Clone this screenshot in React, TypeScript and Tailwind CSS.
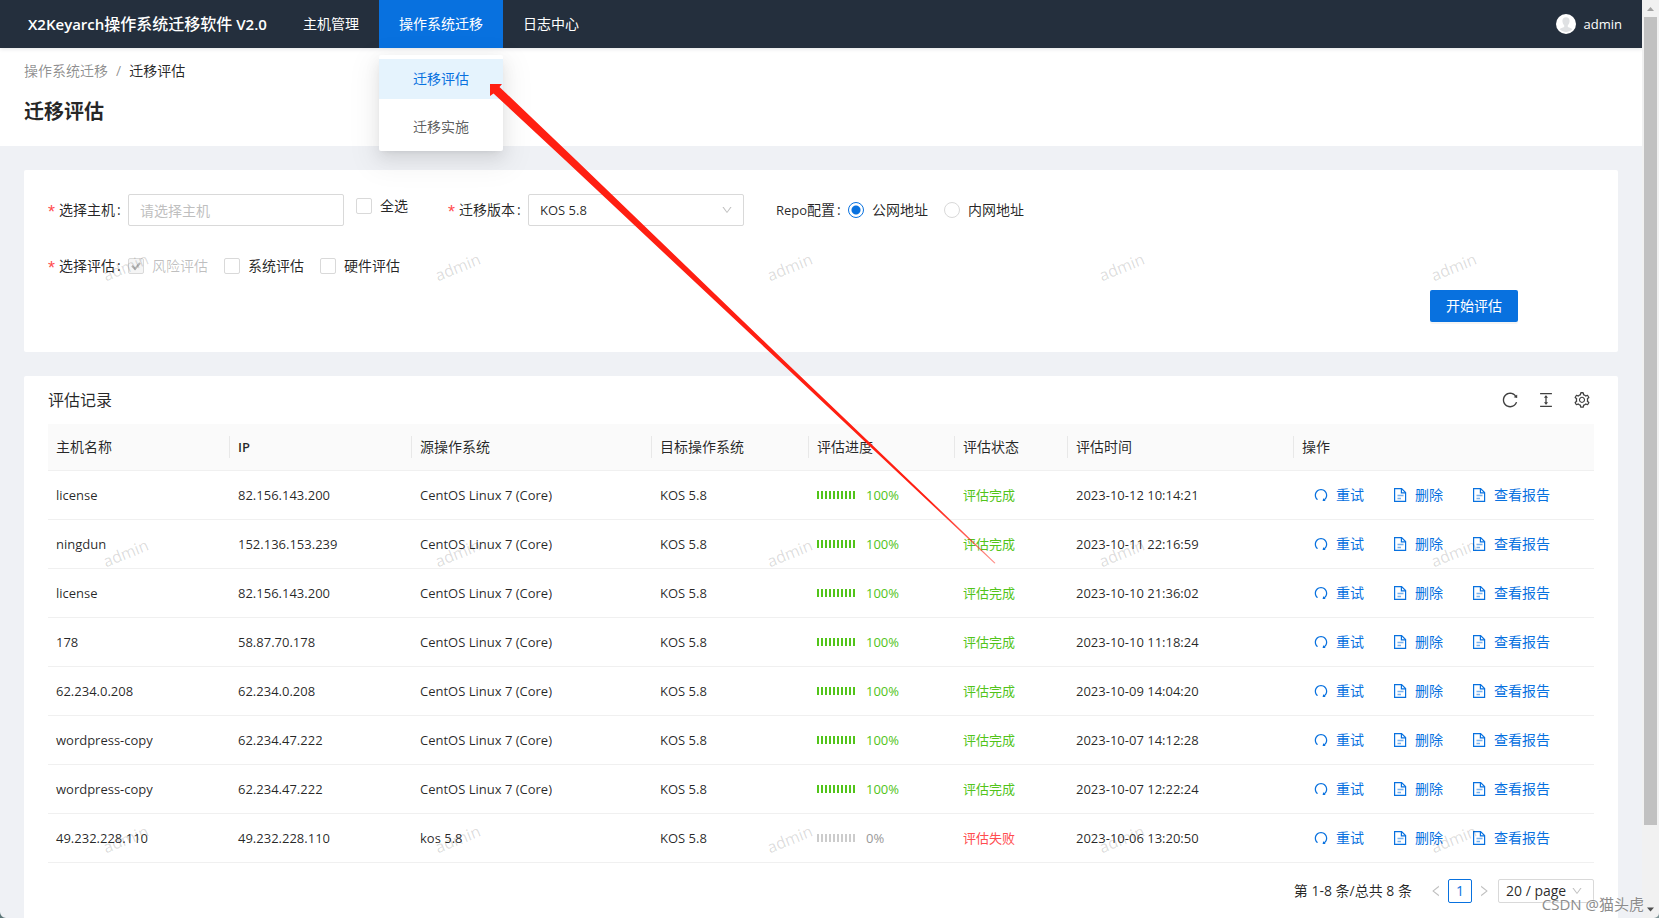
import { useState, type ReactNode } from 'react';
import {
  AiOutlineColumnHeight,
  AiOutlineDown,
  AiOutlineLeft,
  AiOutlineRedo,
  AiOutlineReload,
  AiOutlineRight,
  AiOutlineSetting
} from 'react-icons/ai';

const columns = [
  { title: '主机名称', width: 182 },
  { title: 'IP', width: 182, bold: true },
  { title: '源操作系统', width: 240 },
  { title: '目标操作系统', width: 157 },
  { title: '评估进度', width: 146 },
  { title: '评估状态', width: 113 },
  { title: '评估时间', width: 226 },
  { title: '操作', width: 300 }
];

const records = [
  { host: 'license', ip: '82.156.143.200', source: 'CentOS Linux 7 (Core)', done: true, time: '2023-10-12 10:14:21' },
  { host: 'ningdun', ip: '152.136.153.239', source: 'CentOS Linux 7 (Core)', done: true, time: '2023-10-11 22:16:59' },
  { host: 'license', ip: '82.156.143.200', source: 'CentOS Linux 7 (Core)', done: true, time: '2023-10-10 21:36:02' },
  { host: '178', ip: '58.87.70.178', source: 'CentOS Linux 7 (Core)', done: true, time: '2023-10-10 11:18:24' },
  { host: '62.234.0.208', ip: '62.234.0.208', source: 'CentOS Linux 7 (Core)', done: true, time: '2023-10-09 14:04:20' },
  { host: 'wordpress-copy', ip: '62.234.47.222', source: 'CentOS Linux 7 (Core)', done: true, time: '2023-10-07 14:12:28' },
  { host: 'wordpress-copy', ip: '62.234.47.222', source: 'CentOS Linux 7 (Core)', done: true, time: '2023-10-07 12:22:24' },
  { host: '49.232.228.110', ip: '49.232.228.110', source: 'kos 5.8', done: false, time: '2023-10-06 13:20:50' }
];

const FileIcon = () => (
  <svg width="16" height="16" viewBox="0 0 16 16" fill="none" stroke="currentColor">
    <path d="M2.600 1.600h7l4 4v8.800h-11z" fill="#fff" strokeWidth="1.2" />
    <path d="M9.400 1.800v4h4" strokeWidth="1.2" />
    <path d="M5.500 8.500h6M5.500 11.500h3.500" strokeWidth="1.600" opacity="0.55" />
  </svg>
);

const Avatar = () => (
  <svg width="20" height="20" viewBox="0 0 20 20">
    <circle cx="10" cy="10" r="10" fill="#fff" />
    <path
      d="M10 3.200c-2.300 0-3.700 1.600-3.600 3.900.1 1.700.8 3.300 1.800 4.200v1.700c-1.700.7-3.500 1-4.600 2.300a8.600 8.600 0 0 0 12.800 0c-1.100-1.300-2.900-1.600-4.600-2.300v-1.700c1-.9 1.700-2.500 1.800-4.200.1-2.300-1.300-3.900-3.600-3.900z"
      fill="#dfe1e3"
    />
  </svg>
);

const Label = ({ htmlFor, children, required }: { htmlFor?: string; children: ReactNode; required?: boolean }) => (
  <label htmlFor={htmlFor} className="flex shrink-0 items-center pr-2">
    {required && <span className="mr-1 w-[7px] pt-1 font-['Liberation_Sans'] text-lg text-[#ff4d4f]">*</span>}
    {children}
    <span className="ml-[2px] w-[3px]">:</span>
  </label>
);

const Check = ({ text, checked, disabled }: { text: string; checked?: boolean; disabled?: boolean }) => (
  <label className={disabled ? 'flex items-center gap-2 text-black/25' : 'flex items-center gap-2'}>
    <span className="grid h-4 w-4">
      <input
        type="checkbox"
        defaultChecked={checked}
        disabled={disabled}
        className="peer h-4 w-4 appearance-none rounded-xs border border-[#d9d9d9] bg-white [grid-area:1/1] disabled:bg-[#f5f5f5]"
      />
      <svg
        viewBox="0 0 16 16"
        className="pointer-events-none hidden h-4 w-4 [grid-area:1/1] peer-checked:block"
        fill="none"
        stroke="#b5b5b5"
        strokeWidth="2"
      >
        <path d="M4 7.800l3 3.200 5-6" />
      </svg>
    </span>
    {text}
  </label>
);

const Radio = ({ text, checked, onChange }: { text: string; checked: boolean; onChange: () => void }) => (
  <label className="flex items-center gap-2">
    <input
      type="radio"
      name="repo"
      checked={checked}
      onChange={onChange}
      className="h-4 w-4 appearance-none rounded-full border border-[#d9d9d9] bg-white checked:border-[#0871df] checked:bg-[radial-gradient(circle,#0871df_4px,transparent_5px)]"
    />
    {text}
  </label>
);

const Progress = ({ done }: { done: boolean }) => (
  <div className="flex items-center">
    <div className="flex gap-[2px]">
      {Array.from({ length: 10 }, (_, i) => (
        <span key={i} className={done ? 'h-2 w-[2px] bg-[#52c41a]' : 'h-2 w-[2px] bg-[#cccccc]'} />
      ))}
    </div>
    <span className={done ? 'ml-[11px] text-[#52c41a]' : 'ml-[11px] text-[#999999]'}>{done ? '100%' : '0%'}</span>
  </div>
);

const Watermark = () => (
  <div className="pointer-events-none absolute inset-x-0 top-[124px] z-20 flex flex-col overflow-hidden">
    {[0, 1, 2].map((row) => (
      <div key={row} className="flex h-[286px] items-center pl-[102px]">
        {[0, 1, 2, 3, 4].map((col) => (
          <span key={col} className="w-[332px] shrink-0">
            <span className="inline-block -rotate-[22deg] text-base text-black/15">admin</span>
          </span>
        ))}
      </div>
    ))}
  </div>
);

const App = () => {
  const [repo, setRepo] = useState('public');

  return (
    <div className="relative flex h-screen overflow-hidden bg-[#eff1f5] font-['Open_Sans','Noto_Sans_CJK_SC',sans-serif] text-sm leading-[22px] text-black/85">
      <div className="flex min-w-0 flex-1 flex-col overflow-hidden">
        <header className="relative z-10 flex h-12 shrink-0 items-center bg-[#242f3d] pr-5 pl-7 text-white shadow-[0_1px_4px_rgba(0,21,41,0.12)]">
          <h1 className="w-[255px] shrink-0 text-[15px] font-semibold whitespace-nowrap">
            X2Keyarch<span className="text-base font-medium">操作系统迁移软件</span> V2.0
          </h1>
          <nav className="flex flex-1">
            <a href="#hosts" className="flex h-12 items-center px-5">主机管理</a>
            <div className="relative">
              <a href="#migration" className="flex h-12 items-center bg-[#0871df] px-5">操作系统迁移</a>
              <div className="absolute inset-x-0 top-[55px] flex flex-col gap-2 rounded-xs bg-white py-1 text-center text-black/65 shadow-[0_3px_6px_-4px_rgba(0,0,0,0.12),0_6px_16px_rgba(0,0,0,0.08),0_9px_28px_8px_rgba(0,0,0,0.05)]">
                <a href="#assess" className="bg-[#e5f3fd] leading-10 text-[#0871df]">迁移评估</a>
                <a href="#implement" className="leading-10">迁移实施</a>
              </div>
            </div>
            <a href="#logs" className="flex h-12 items-center px-5">日志中心</a>
          </nav>
          <div className="flex items-center gap-2 text-[13px]">
            <Avatar />
            admin
          </div>
        </header>

        <div className="h-[98px] shrink-0 bg-white px-6 pt-3">
          <div className="flex gap-2">
            <a href="#migration" className="text-black/45">操作系统迁移</a>
            <span className="text-black/45">/</span>
            <span>迁移评估</span>
          </div>
          <h2 className="mt-3.5 text-xl leading-8 font-semibold">迁移评估</h2>
        </div>

        <main className="flex min-h-0 flex-1 flex-col gap-6 px-6 pt-6">
          <form className="shrink-0 rounded-xs bg-white px-6 pt-6 pb-[30px]" onSubmit={(e) => e.preventDefault()}>
            <div className="flex h-8 items-center">
              <Label htmlFor="host" required>选择主机</Label>
              <input
                id="host"
                placeholder="请选择主机"
                className="mr-3 h-8 w-[216px] rounded-xs border border-[#d9d9d9] px-[11px] placeholder:text-[#bfbfbf]"
              />
              <div className="mr-10 self-start pt-[1px]">
                <Check text="全选" />
              </div>
              <Label htmlFor="version" required>迁移版本</Label>
              <div className="relative mr-8">
                <select
                  id="version"
                  className="h-8 w-[216px] appearance-none rounded-xs border border-[#d9d9d9] bg-white px-[11px] text-[13px]"
                >
                  <option>KOS 5.8</option>
                </select>
                <AiOutlineDown className="pointer-events-none absolute top-[10px] right-[11px] h-3 w-3 text-black/25" />
              </div>
              <Label><span className="text-[13px]">Repo</span>配置</Label>
              <div className="flex gap-4">
                <Radio text="公网地址" checked={repo === 'public'} onChange={() => setRepo('public')} />
                <Radio text="内网地址" checked={repo === 'private'} onChange={() => setRepo('private')} />
              </div>
            </div>
            <div className="mt-6 flex h-8 items-center">
              <Label required>选择评估</Label>
              <div className="flex gap-4">
                <Check text="风险评估" checked disabled />
                <Check text="系统评估" />
                <Check text="硬件评估" />
              </div>
            </div>
            <div className="mt-2 flex justify-end pr-[76px]">
              <button
                type="submit"
                className="h-8 rounded-xs bg-[#0871df] px-4 text-white shadow-[0_2px_0_rgba(0,0,0,0.045)]"
              >
                开始评估
              </button>
            </div>
          </form>

          <section className="flex-1 rounded-t-xs bg-white px-6">
            <div className="flex h-12 items-center justify-between">
              <h3 className="text-base">评估记录</h3>
              <div className="flex gap-[18px] pr-[3px] text-lg text-black/75">
                <button aria-label="刷新"><AiOutlineReload /></button>
                <button aria-label="密度"><AiOutlineColumnHeight /></button>
                <button aria-label="列设置"><AiOutlineSetting /></button>
              </div>
            </div>

            <table className="w-full table-fixed border-separate border-spacing-0 text-left">
              <colgroup>
                {columns.map((column) => (
                  <col key={column.title} style={{ width: column.width }} />
                ))}
              </colgroup>
              <thead>
                <tr>
                  {columns.map((column) => (
                    <th
                      key={column.title}
                      className="group h-[47px] border-b border-[#f0f0f0] bg-[#fafafa] p-0 font-normal"
                    >
                      <div className="h-[22px] border-r border-[#e8e8e8] pl-2 group-last:border-0">
                        <span className={column.bold ? 'text-[13px] font-semibold' : ''}>{column.title}</span>
                      </div>
                    </th>
                  ))}
                </tr>
              </thead>
              <tbody className="text-[13px] [&_td]:h-[49px] [&_td]:border-b [&_td]:border-[#f0f0f0] [&_td]:px-2 [&_td]:py-0">
                {records.map((record) => (
                  <tr key={record.time}>
                    <td>{record.host}</td>
                    <td>{record.ip}</td>
                    <td>{record.source}</td>
                    <td>KOS 5.8</td>
                    <td><Progress done={record.done} /></td>
                    <td className={record.done ? 'text-[#52c41a]' : 'text-[#ff4d4f]'}>
                      {record.done ? '评估完成' : '评估失败'}
                    </td>
                    <td>{record.time}</td>
                    <td>
                      <div className="flex gap-7 pl-[11px] text-sm leading-[22px] text-[#0871df]">
                        <button className="flex items-center gap-[7px]"><AiOutlineRedo className="h-4 w-4" />重试</button>
                        <button className="flex items-center gap-[7px]"><FileIcon />删除</button>
                        <button className="flex items-center gap-[7px]"><FileIcon />查看报告</button>
                      </div>
                    </td>
                  </tr>
                ))}
              </tbody>
            </table>

            <div className="mt-4 flex h-6 items-center justify-end">
              <span className="mr-3">第 1-8 条/总共 8 条</span>
              <button aria-label="上一页" className="flex h-6 w-6 items-center justify-center text-sm text-black/25">
                <AiOutlineLeft />
              </button>
              <button className="h-6 w-6 rounded-xs border border-[#0871df] font-medium text-[#0871df]">1</button>
              <button aria-label="下一页" className="mr-[2px] flex h-6 w-6 items-center justify-center text-sm text-black/25">
                <AiOutlineRight />
              </button>
              <div className="relative">
                <select
                  aria-label="每页条数"
                  className="block h-6 w-24 appearance-none rounded-xs border border-[#d9d9d9] bg-white pl-[7px]"
                >
                  <option>20 / page</option>
                </select>
                <AiOutlineDown className="pointer-events-none absolute top-[6px] right-[11px] h-3 w-3 text-black/25" />
              </div>
            </div>
          </section>
        </main>
      </div>

      <div className="z-10 flex w-[17px] shrink-0 flex-col items-center bg-[#f1f1f1]">
        <svg width="17" height="17" viewBox="0 0 17 17" className="shrink-0">
          <path d="M5 11l3.500-4 3.500 4z" fill="#a3a3a3" />
        </svg>
        <div className="h-[88%] w-[13px] bg-[#c1c1c1]" />
        <svg width="17" height="17" viewBox="0 0 17 17" className="mt-auto shrink-0">
          <path d="M5 6.500l3.500 4 3.500-4z" fill="#505050" />
          <path d="M17 12v5h-5a5 5 0 0 0 5-5z" fill="#7c9294" />
        </svg>
      </div>

      <Watermark />

      {/* hand-drawn pointer to the active menu item */}
      <svg className="pointer-events-none absolute top-[84px] left-[490px] z-30" width="506" height="480" viewBox="490 84 506 480">
        <defs>
          <linearGradient id="tail" gradientUnits="userSpaceOnUse" x1="930" y1="500" x2="995" y2="563">
            <stop offset="0" stopColor="#ff1f12" />
            <stop offset="1" stopColor="#ff1f12" stopOpacity="0.5" />
          </linearGradient>
        </defs>
        <path d="M490 84h12l-2.500 3L576 160 783.500 360 995.500 563l-1 .500L778 360 565 160 493.500 93.500l-3.500 2.500z" fill="url(#tail)" />
      </svg>

      <span className="pointer-events-none absolute right-[15px] bottom-[3px] z-30 text-[15px] text-[#8c8c8c] [text-shadow:0_0_2px_#fff]">
        CSDN @猫头虎
      </span>
      <svg className="absolute bottom-0 left-0 z-30" width="6" height="6" viewBox="0 0 6 6">
        <path d="M0 0v6h6a6 6 0 0 1-6-6z" fill="#5c7577" />
      </svg>
    </div>
  );
};

export default App;
